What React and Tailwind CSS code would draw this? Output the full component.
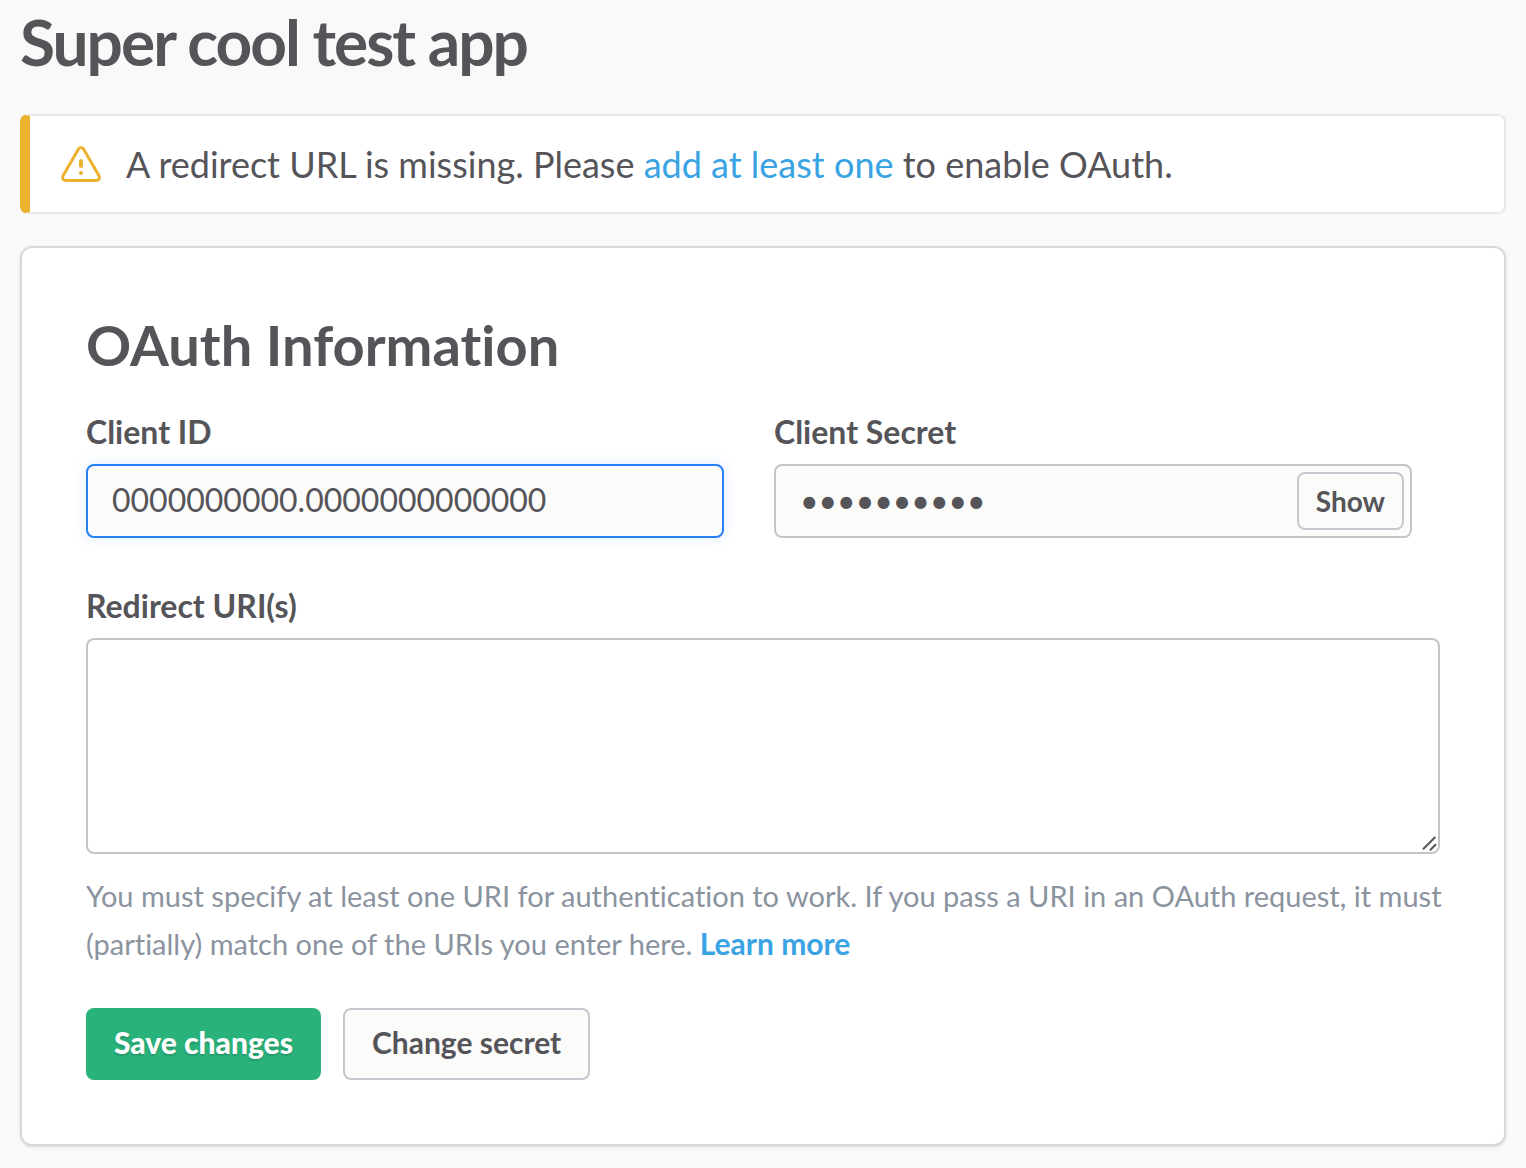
function WarningIcon() {
  return (
    <svg viewBox="0 0 42 38" className="h-[38px] w-[42px] shrink-0" fill="none" stroke="#ecb22e" strokeWidth="3" strokeLinejoin="round" strokeLinecap="round" aria-hidden="true">
      <path d="M18.2 4.4 3.2 30.4c-1.5 2.6-.4 5 2.4 5h30.8c2.8 0 3.9-2.4 2.4-5L23.8 4.4c-1.4-2.4-4.2-2.4-5.6 0Z" />
      <path d="M21 16v5" strokeWidth="4" />
      <circle cx="21" cy="28" r="2" fill="#ecb22e" stroke="none" />
    </svg>
  );
}

const labelClass = "block text-[32px] leading-[48px] font-bold";
const fieldClass = "block w-full rounded-lg border-2 outline-none";

export default function App() {
  return (
    <div className="min-h-screen bg-[#f9f9f9] px-5 pb-5 font-['Lato',sans-serif] text-[#555459] [font-variant-ligatures:none]">
      <h1 className="pt-0.5 text-[64px] leading-[80px] font-bold tracking-[-2px]">Super cool test app</h1>

      <div role="alert" className="mt-8 flex items-center gap-6 rounded-lg border-2 border-l-[10px] border-[#e8e8e8] border-l-[#ecb22e] bg-white py-6 pr-6 pl-[30px]">
        <WarningIcon />
        <p className="text-[36px] leading-[48px]">
          A redirect URL is missing. Please <a href="#redirect" className="text-[#3aa3e3]">add at least one</a> to enable OAuth.
        </p>
      </div>

      <form className="mt-8 rounded-xl border-2 border-[#d9d9d9] bg-white p-16 shadow-sm" onSubmit={(e) => e.preventDefault()}>
        <h2 className="text-[56px] leading-[66px] font-bold">OAuth Information</h2>

        <div className="mt-[30px] mr-7 grid grid-cols-2 gap-[50px]">
          <div>
            <label htmlFor="client-id" className={labelClass}>Client ID</label>
            <input id="client-id" readOnly defaultValue="0000000000.0000000000000" className={`${fieldClass} mt-2 h-[74px] border-[#2780f8] bg-[#fbfbfa] px-6 pb-1 text-[32px] shadow-[0_0_14px_rgba(39,128,248,0.15)]`} />
          </div>
          <div>
            <label htmlFor="client-secret" className={labelClass}>Client Secret</label>
            <div className="mt-2 flex h-[74px] items-center rounded-lg border-2 border-[#c5c5c5] bg-[#fbfbfa] pr-1.5 pl-6">
              <input id="client-secret" type="password" readOnly defaultValue="0123456789" className="min-w-0 flex-1 bg-transparent text-[32px] outline-none" />
              <button type="button" className="h-[58px] rounded-lg border-2 border-[#c5c9cd] bg-[#fbfbfa] px-[17px] text-[28px] font-bold">Show</button>
            </div>
          </div>
        </div>

        <label htmlFor="redirect" className={`${labelClass} mt-11`}>Redirect URI(s)</label>
        <div className="relative mt-2">
          <textarea id="redirect" className={`${fieldClass} h-[216px] resize-none border-[#c5c5c5] bg-white px-6 py-3 text-[32px]`} />
          <svg viewBox="0 0 16 16" className="pointer-events-none absolute right-0.5 bottom-0.5 size-4" stroke="#555459" strokeWidth="2" strokeLinecap="round" aria-hidden="true">
            <path d="M1.5 12.8 12.8 1.5M8.5 13.7l5-5" />
          </svg>
        </div>

        <p className="mt-[18px] -mr-4 text-[29px] leading-[48px] text-[#8b939f]">
          You must specify at least one URI for authentication to work. If you pass a URI in an OAuth request, it must (partially) match one of the URIs you enter here. <a href="#learn" className="text-[30px] leading-none font-bold text-[#3aa3e3]">Learn more</a>
        </p>

        <div className="mt-10 flex gap-[22px]">
          <button type="submit" className="h-[72px] rounded-lg bg-[#2ab27b] px-7 pb-1 text-[30px] font-black text-white [text-shadow:0_2px_2px_rgba(0,0,0,0.15)]">Save changes</button>
          <button type="button" className="h-[72px] rounded-lg border-2 border-[#c5c9cd] bg-[#fbfbfa] px-[27px] pb-1 text-[30px] font-bold">Change secret</button>
        </div>
      </form>
    </div>
  );
}
